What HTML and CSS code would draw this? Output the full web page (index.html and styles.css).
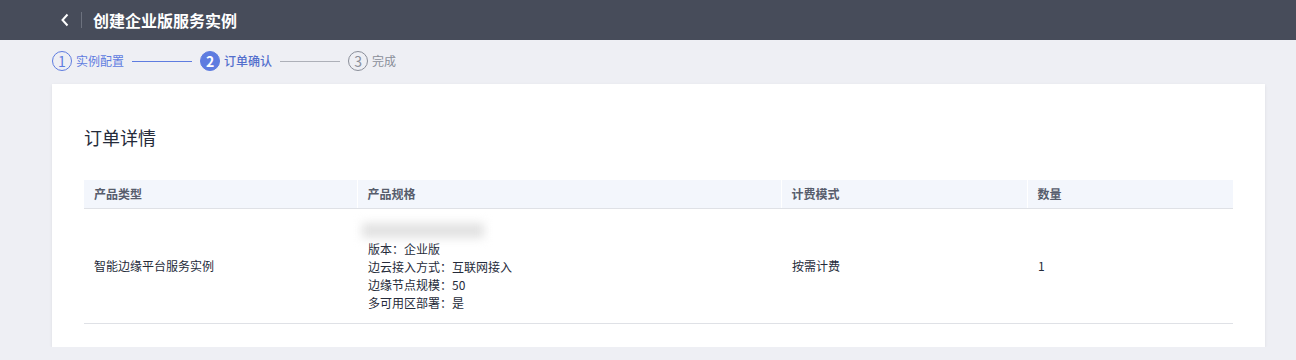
FILE: index.html
```html
<!DOCTYPE html>
<html lang="zh-CN">

<head>
    <meta charset="UTF-8">
    <meta name="viewport" content="width=device-width, initial-scale=1.0">
    <title>创建企业版服务实例</title>
    <link rel="stylesheet" href="styles.css">
</head>

<body>

    <div class="topbar">
        <a class="back" href="#">
            <svg width="10" height="14" viewBox="0 0 10 14">
                <path d="M7.5 1.5 L2.5 7 L7.5 12.5" fill="none" stroke="#fff" stroke-width="2" />
            </svg>
        </a>
        <span class="divider"></span>
        <h1 class="page-title">创建企业版服务实例</h1>
    </div>

    <div class="steps">
        <div class="step done">
            <span class="step-num">1</span>
            <span class="step-label">实例配置</span>
        </div>
        <span class="step-line active"></span>
        <div class="step current">
            <span class="step-num">2</span>
            <span class="step-label">订单确认</span>
        </div>
        <span class="step-line"></span>
        <div class="step">
            <span class="step-num">3</span>
            <span class="step-label">完成</span>
        </div>
    </div>

    <div class="card">
        <h2 class="card-title">订单详情</h2>
        <table class="order-table">
            <thead>
                <tr>
                    <th class="col-type">产品类型</th>
                    <th class="col-spec">产品规格</th>
                    <th class="col-mode">计费模式</th>
                    <th>数量</th>
                </tr>
            </thead>
            <tbody>
                <tr>
                    <td>智能边缘平台服务实例</td>
                    <td class="spec-cell">
                        <div class="blurred"></div>
                        <p>版本：企业版</p>
                        <p>边云接入方式：互联网接入</p>
                        <p>边缘节点规模：50</p>
                        <p>多可用区部署：是</p>
                    </td>
                    <td>按需计费</td>
                    <td>1</td>
                </tr>
            </tbody>
        </table>
    </div>

</body>

</html>
```

FILE: styles.css
```css
body {
    margin: 0;
    padding: 0;
    background-color: #eeeff4;
    font-family: "Noto Sans CJK SC", "Noto Sans", sans-serif;
    font-size: 12px;
    color: #252b3a;
}

.topbar {
    height: 40px;
    background-color: #474c5a;
    display: flex;
    align-items: center;
    padding-left: 60px;
}

.back {
    display: flex;
    align-items: center;
}

.divider {
    width: 1px;
    height: 16px;
    background-color: #6c717e;
    margin: 0 11px 0 11px;
}

.page-title {
    margin: 0;
    font-size: 16px;
    font-weight: bold;
    color: #fff;
    line-height: 40px;
}

.steps {
    display: flex;
    align-items: center;
    margin-top: 11px;
    padding-left: 52px;
    height: 20px;
}

.step {
    display: flex;
    align-items: center;
    gap: 4px;
    color: #8a8e99;
}

.step-num {
    width: 18px;
    height: 18px;
    border: 1px solid #8a8e99;
    border-radius: 50%;
    display: flex;
    align-items: center;
    justify-content: center;
    font-size: 14px;
    line-height: 1;
}

.step-label {
    line-height: 20px;
}

.step.done {
    color: #5e7ce0;
}

.step.done .step-num {
    border-color: #5e7ce0;
}

.step.current {
    color: #526ecc;
    font-weight: 500;
}

.step.current .step-num {
    background-color: #5e7ce0;
    border-color: #5e7ce0;
    color: #fff;
    font-weight: bold;
}

.step-line {
    width: 60px;
    height: 1px;
    background-color: #adb0b8;
    margin: 0 8px;
}

.step-line.active {
    background-color: #5e7ce0;
}

.card {
    margin: 13px 31px 0 52px;
    background-color: #fff;
    padding: 40px 32px 23px 32px;
    box-shadow: 0 1px 3px rgba(0, 0, 0, 0.08);
}

.card-title {
    margin: 0 0 30px 0;
    font-size: 18px;
    font-weight: normal;
    line-height: 26px;
    color: #252b3a;
}

.order-table {
    width: 100%;
    border-collapse: collapse;
    table-layout: fixed;
}

.order-table th {
    box-sizing: border-box;
    height: 28px;
    padding: 0 10px;
    background-color: #f3f6fc;
    border-bottom: 1px solid #dfe1e6;
    border-left: 1px solid #fff;
    text-align: left;
    font-weight: 600;
    color: #575d6c;
}

.order-table th:first-child {
    border-left: none;
}

.col-type {
    width: 273px;
}

.col-spec {
    width: 424px;
}

.col-mode {
    width: 246px;
}

.order-table td {
    padding: 0 10px 0 11px;
    border-bottom: 1px solid #dfe1e6;
    vertical-align: middle;
    line-height: 18px;
}

.order-table td:first-child {
    padding-left: 10px;
}

.order-table td.spec-cell {
    padding-top: 11px;
    padding-bottom: 11px;
}

.spec-cell p {
    margin: 0;
    line-height: 18px;
}

.blurred {
    width: 122px;
    height: 15px;
    margin: 3px 0 2px -6px;
    background-color: #e2e2e2;
    filter: blur(5px);
}
```
